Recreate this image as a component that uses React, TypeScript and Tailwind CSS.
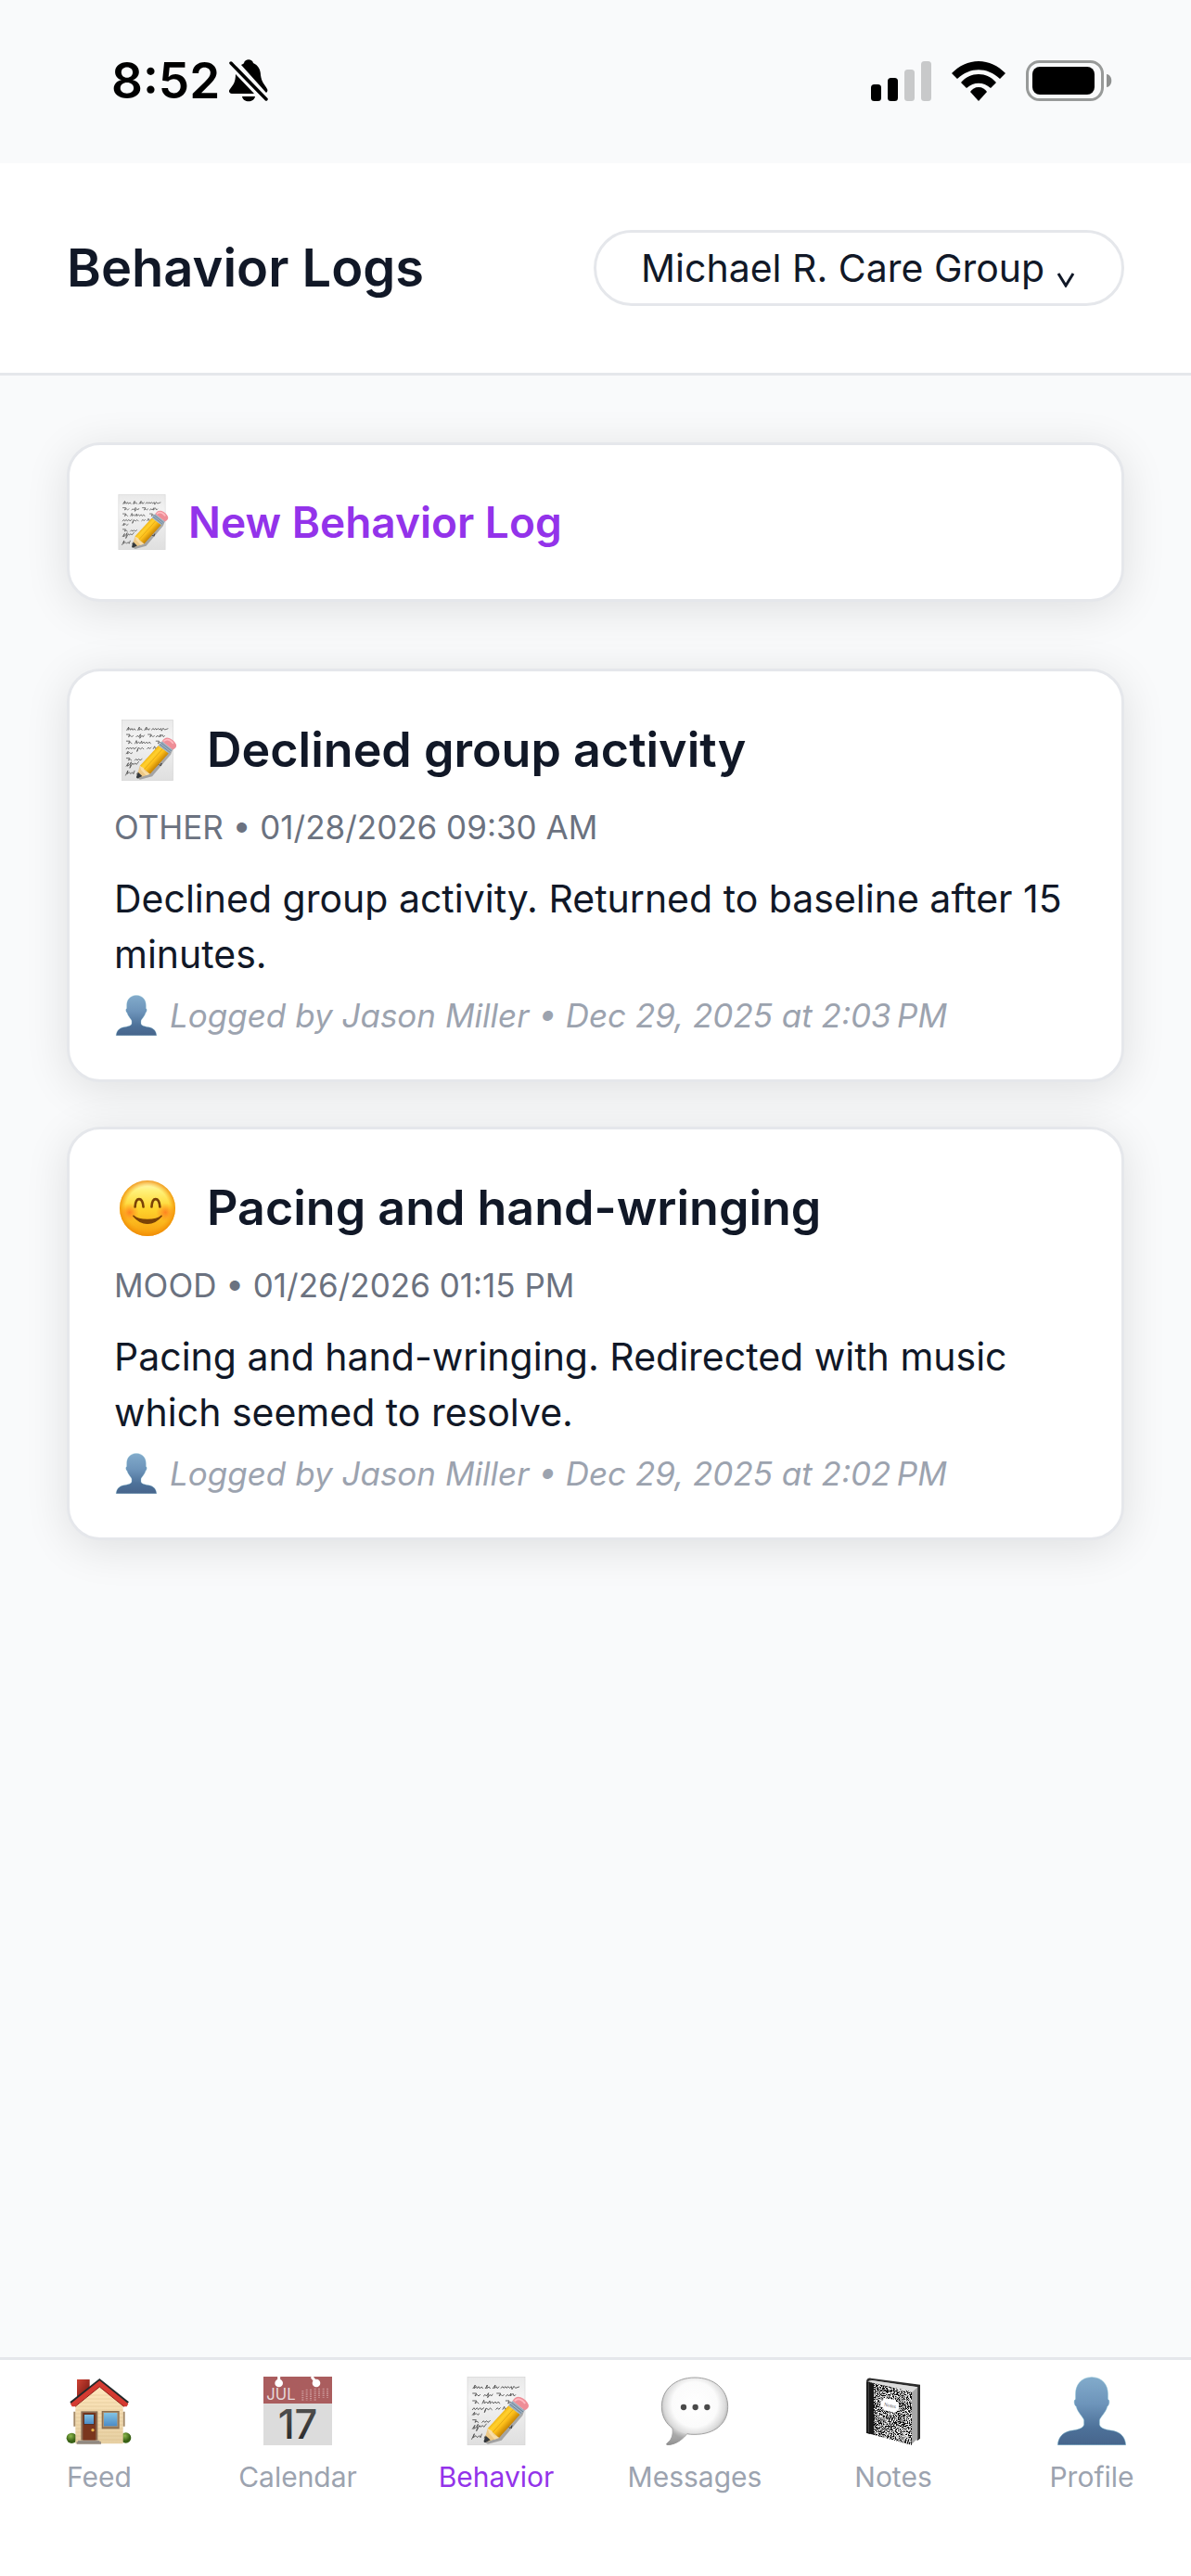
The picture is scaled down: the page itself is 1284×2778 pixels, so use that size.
import React, { useState } from 'react'

interface IconProps {
  className?: string
}

interface BehaviorLog {
  id: number
  icon: React.FC<IconProps>
  title: string
  category: string
  occurredAt: string
  notes: string
  author: string
  loggedAt: string
}

const MemoIcon: React.FC<IconProps> = ({ className }) => (
  <svg viewBox="0 0 222 222" className={className} aria-hidden="true">
    <defs>
      <linearGradient id="memoPaper" x1="0" y1="0" x2="0" y2="1">
        <stop offset="0" stopColor="#e9e9e9" />
        <stop offset="0.3" stopColor="#f3f3f3" />
        <stop offset="1" stopColor="#dfdfdf" />
      </linearGradient>
      <linearGradient id="memoPencil" gradientUnits="userSpaceOnUse" x1="112" y1="128" x2="150" y2="164">
        <stop offset="0" stopColor="#e9a90c" />
        <stop offset="0.3" stopColor="#ffd02e" />
        <stop offset="0.6" stopColor="#fdbf1a" />
        <stop offset="1" stopColor="#c88504" />
      </linearGradient>
    </defs>
    <rect x="18" y="1" width="186" height="220" fill="url(#memoPaper)" stroke="#d4d4d4" strokeWidth="2" />
    <g fill="none" stroke="#4a4a4a" strokeWidth="2.6" strokeLinecap="round" strokeLinejoin="round">
      <path d="M36 38l7-11-3 11 7-6 2 6 5-6 3 6 7-5 3 5M76 38l6-11-2 11 8-5 3 5M100 38l8-11-3 11 6-6 3 6 6-5M126 37l6-5 3 5 6-5 3 5 6-5 4 5 6-5 2 9 6-10 5 6 12-4" />
      <path d="M35 54h12l-5 9 7-5 5 5 5-5M70 63l5-5 4 5 7-10-3 15 8-10 4 5 4-6M113 54h12l-5 9 6-5 5 5 5-5M142 63l6-5 4 5 7-9-2 9 8-8 4 8 4-4" />
      <path d="M35 78h12l-5 9 7-5 5 5M66 87l5-11 2 11 6-6 5 6 6-9 1 9 7-6 4 6 6-6 4 6 6-6 4 6M142 78h11l-4 9 8-5 4 5" />
      <path d="M34 107l5-6 4 6 6-6 4 6 6-6 4 6 8-6M76 107l-3 9 5-14 8 5 6-5 5 5M110 106l5-5 4 5 5-5M132 106l5-9 3 9 8-6" />
      <path d="M34 124l7-9-3 9 8-5 5 5 5-4M35 140h11l-4 8 6-4 5 4M65 148l5-5 4 5 6-5 4 5 7-5M105 147l6-5 4 5" />
      <path d="M34 169l8-12-4 12 8-5 6-10-5 22 10-18 3 5 7-5 4 5 8-10M144 167l7-5 5 5 6-9-2 9" />
      <path d="M32 202l8-17-3 12 8-6 5 6 6-6 4 6 4-11M76 192l-4 7 7-2" />
    </g>
    <path d="M180 116l26-16-10 26-68 80-44 12-10-6 34-12z" fill="#000" opacity=".28" />
    <path d="M151 94l37 28-68 76-37-30z" fill="url(#memoPencil)" />
    <path d="M166 106l-68 76" stroke="#b97f05" strokeWidth="2" opacity=".6" />
    <path d="M83 168l37 30-43 14-5-5z" fill="#edc886" />
    <path d="M83 168l13 7 7 13 17 10-14 5-18-20z" fill="#f8dda6" />
    <path d="M77 191l15 14-15 8c-5 1-7-2-6-6z" fill="#33383d" />
    <path d="M164 78l39 31-15 14-38-30z" fill="#9db0c0" />
    <path d="M160 84l38 30M155 89l38 30" stroke="#60788d" strokeWidth="2.5" />
    <path d="M164 78c8-12 16-15 26-11 11 4 21 13 25 23 3 9-3 15-12 19z" fill="#ee8e97" />
    <path d="M172 77c10-8 22-3 31 8" stroke="#ffb9c0" strokeWidth="6" fill="none" strokeLinecap="round" />
  </svg>
)

const SmileIcon: React.FC<IconProps> = ({ className }) => (
  <svg viewBox="0 0 222 222" className={className} aria-hidden="true">
    <defs>
      <linearGradient id="smileFace" x1="0" y1="0" x2="0" y2="1">
        <stop offset="0" stopColor="#fff9c9" />
        <stop offset="0.18" stopColor="#fff27a" />
        <stop offset="0.5" stopColor="#ffd52e" />
        <stop offset="1" stopColor="#f79a0c" />
      </linearGradient>
      <radialGradient id="smileEdge">
        <stop offset="0.78" stopColor="#f79a0c" stopOpacity="0" />
        <stop offset="1" stopColor="#ee8a05" stopOpacity=".85" />
      </radialGradient>
      <radialGradient id="smileCheek">
        <stop offset="0" stopColor="#ff6a1e" stopOpacity=".75" />
        <stop offset="1" stopColor="#ff7a1e" stopOpacity="0" />
      </radialGradient>
    </defs>
    <circle cx="111" cy="111" r="101" fill="url(#smileFace)" />
    <circle cx="111" cy="111" r="101" fill="url(#smileEdge)" />
    <circle cx="46" cy="126" r="34" fill="url(#smileCheek)" />
    <circle cx="176" cy="126" r="34" fill="url(#smileCheek)" />
    <path d="M66 106c2-38 27-38 30 0M126 106c2-38 27-38 30 0" fill="none" stroke="#7a4207" strokeWidth="9" strokeLinecap="round" />
    <path d="M60 139c30 36 72 36 102 0-20 19-82 19-102 0z" fill="#7a4207" stroke="#7a4207" strokeWidth="5" strokeLinejoin="round" />
  </svg>
)

const PersonIcon: React.FC<IconProps> = ({ className }) => (
  <svg viewBox="0 0 222 222" className={className} aria-hidden="true">
    <defs>
      <linearGradient id="personFill" x1="0" y1="0" x2="0" y2="1">
        <stop offset="0" stopColor="#82abcb" />
        <stop offset="0.4" stopColor="#6d94ba" />
        <stop offset="0.75" stopColor="#4d7199" />
        <stop offset="1" stopColor="#47658c" />
      </linearGradient>
    </defs>
    <path
      d="M111 2C76 2 59 28 59 55v18c-8 4-4 20 2 24 5 20 24 36 25 44v14c-3 14-22 16-44 20C14 182 3 198 1 221h220c-2-23-13-39-41-46-22-4-41-6-44-20v-14c1-8 20-24 25-44 6-4 10-20 2-24V55c0-27-17-53-52-53z"
      fill="url(#personFill)"
      stroke="#74b3cb"
      strokeWidth="1.5"
    />
  </svg>
)

const HouseIcon: React.FC<IconProps> = ({ className }) => (
  <svg viewBox="0 0 222 222" className={className} aria-hidden="true">
    <defs>
      <linearGradient id="houseWall" x1="0" y1="0" x2="0" y2="1">
        <stop offset="0" stopColor="#ffe7bd" />
        <stop offset="1" stopColor="#e6cfa2" />
      </linearGradient>
      <linearGradient id="houseChimney" x1="0" y1="0" x2="1" y2="1">
        <stop offset="0" stopColor="#d04334" />
        <stop offset="1" stopColor="#6d130e" />
      </linearGradient>
      <linearGradient id="houseGlass" x1="0" y1="0" x2="0" y2="1">
        <stop offset="0" stopColor="#83c3e4" />
        <stop offset="1" stopColor="#4b8bc6" />
      </linearGradient>
      <radialGradient id="houseBush" cx=".4" cy=".3">
        <stop offset="0" stopColor="#8db84c" />
        <stop offset="1" stopColor="#386115" />
      </radialGradient>
    </defs>
    <circle cx="22" cy="199" r="17" fill="url(#houseBush)" />
    <circle cx="197" cy="198" r="17" fill="url(#houseBush)" />
    <path d="M39 9h41v28L39 72z" fill="url(#houseChimney)" />
    <path d="M28 113h7v48h-7zM187 113h7v48h-7z" fill="#a58a68" />
    <path d="M34 90l78-64 76 64v127H34z" fill="url(#houseWall)" />
    <path d="M34 96h154M34 108h154M34 120h154M34 132h154M34 144h154M34 156h154M34 168h154M34 180h154M34 192h154M34 204h154M50 84h122M66 72h92M80 60h64" stroke="#cfae7b" strokeWidth="1.5" opacity=".65" />
    <path d="M16 82L112 6l95 76-6 6-89-68-90 70z" fill="#22282a" />
    <path d="M18 88l94-75 93 75-5 9h-9l-79-64-80 64h-9z" fill="#d43a31" />
    <path d="M33 97l79-64 79 64" fill="none" stroke="#8f1d17" strokeWidth="3" />
    <rect x="52" y="112" width="54" height="94" fill="#8d6f55" />
    <rect x="58" y="117" width="42" height="89" fill="#7a361d" />
    <rect x="62" y="122" width="32" height="32" fill="url(#houseGlass)" stroke="#51210e" strokeWidth="2" />
    <circle cx="90" cy="173" r="5" fill="#eab64d" />
    <rect x="119" y="111" width="57" height="58" fill="#8d6f4f" />
    <rect x="123" y="115" width="49" height="48" fill="#b19470" />
    <rect x="126" y="117" width="43" height="43" fill="url(#houseGlass)" />
    <path d="M42 206h70v6h5v7H38v-7h4z" fill="#a39a90" />
    <path d="M38 212h79" stroke="#6d665f" strokeWidth="2" />
  </svg>
)

const CalendarIcon: React.FC<IconProps> = ({ className }) => (
  <svg viewBox="0 0 222 222" className={`overflow-visible ${className}`} aria-hidden="true">
    <defs>
      <linearGradient id="calendarDay" x1="0" y1="0" x2="0" y2="1">
        <stop offset="0" stopColor="#5a5a5a" />
        <stop offset="1" stopColor="#222222" />
      </linearGradient>
    </defs>
    <rect width="222" height="222" fill="#dcdcdc" />
    <rect width="222" height="87" fill="#aa5d5e" />
    <path d="M50 0v20M156 0l15 20" stroke="#fff" strokeWidth="9" />
    <circle cx="50" cy="21" r="13" fill="#fff" />
    <circle cx="171" cy="21" r="13" fill="#fff" />
    <path d="M127 45v32M140 41v36M153 41v36M167 38v39M180 38v30M194 38v30M207 38v30" stroke="#c99596" strokeWidth="6" strokeDasharray="4 3" />
    <text x="10" y="75" fontFamily="Inter, sans-serif" fontSize="50" fill="#e6d9d9">JUL</text>
    <text x="111" y="200" textAnchor="middle" fontFamily="Inter, sans-serif" fontSize="130" fontWeight="500" fill="url(#calendarDay)">17</text>
  </svg>
)

const MessageIcon: React.FC<IconProps> = ({ className }) => (
  <svg viewBox="0 0 222 222" className={className} aria-hidden="true">
    <defs>
      <radialGradient id="messageBubble" gradientUnits="userSpaceOnUse" cx="111" cy="90" r="118">
        <stop offset="0" stopColor="#ffffff" />
        <stop offset="0.62" stopColor="#fbfbfb" />
        <stop offset="0.84" stopColor="#dadada" />
        <stop offset="1" stopColor="#9d9d9d" />
      </radialGradient>
      <linearGradient id="messageTail" x1="0" y1="0" x2="0" y2="1">
        <stop offset="0" stopColor="#d0d0d0" stopOpacity="0" />
        <stop offset="1" stopColor="#8c8c8c" />
      </linearGradient>
    </defs>
    <path
      d="M111 3c62 0 107 38 107 94 0 57-45 90-107 90-9 0-17 0-25-2-13 16-35 35-63 36-4 0-4-4-1-6 14-10 20-26 17-48C17 151 4 127 4 97 4 41 49 3 111 3z"
      fill="url(#messageBubble)"
      stroke="#a0a0a0"
      strokeWidth="3"
    />
    <path d="M86 185c-13 16-35 35-63 36-4 0-4-4-1-6 14-10 20-26 17-48 14 9 30 15 47 18z" fill="url(#messageTail)" />
    <circle cx="75" cy="99" r="9.5" fill="#4a4a4a" />
    <circle cx="113" cy="99" r="9.5" fill="#4a4a4a" />
    <circle cx="151" cy="99" r="9.5" fill="#4a4a4a" />
  </svg>
)

const NotebookIcon: React.FC<IconProps> = ({ className }) => (
  <svg viewBox="0 0 222 222" className={className} aria-hidden="true">
    <defs>
      <filter id="notebookSpeckle" x="0" y="0" width="1" height="1">
        <feTurbulence type="fractalNoise" baseFrequency=".35" numOctaves="2" seed="4" />
        <feColorMatrix values="5 0 0 0 -2.2  5 0 0 0 -2.2  5 0 0 0 -2.2  0 0 0 0 1" />
        <feComposite in2="SourceGraphic" operator="in" />
      </filter>
    </defs>
    <path d="M24 16c0-8 6-12 14-11l160 21v174l-10 8V44z" fill="#2b2b2b" />
    <path d="M30 17c2-6 7-6 12-5l148 22v166l-19 18V50z" fill="#a6a6a6" />
    <path d="M34 17l8-5 148 22-18 16z" fill="#dcdcdc" />
    <path d="M24 16l147 33v172L24 182z" fill="#444" filter="url(#notebookSpeckle)" />
    <path d="M24 16l24 6v166l-24-6z" fill="#171717" />
    <path d="M31 20v160" stroke="#4c4c4c" strokeWidth="3" />
    <path d="M81 69l36 6c3 8 7 11 12 12v20c-6 0-9 4-11 10l-36-8c-3-7-7-11-12-12V79c6 0 9-4 11-10z" fill="#fff" />
    <text x="80" y="95" fontFamily="Liberation Serif, serif" fontSize="17" fill="#555" transform="rotate(11 80 95)">Notes</text>
  </svg>
)

const SilentIcon: React.FC<IconProps> = ({ className }) => (
  <svg viewBox="0 0 42 46" className={className} aria-hidden="true">
    <path d="M13 6c1-1 3-1 3-2 1-5 9-5 10 0 5 2 8 7 8 13 1 8 5 11 7 15 1 2 0 3-1 4z" />
    <path d="M7 16l20 21H3c-3 0-4-3-2-5 3-4 6-7 6-16zM14 40h14c-1 7-13 7-14 0z" />
    <path d="M2 4l38 39" stroke="#000" strokeWidth="3.5" strokeLinecap="round" />
  </svg>
)

const SignalIcon: React.FC<IconProps> = ({ className }) => (
  <svg viewBox="0 0 65 43" className={className} aria-hidden="true">
    <rect x="0" y="25" width="11" height="18" rx="3.5" />
    <rect x="18" y="18" width="11" height="25" rx="3.5" />
    <rect x="36" y="9" width="11" height="34" rx="3.5" fill="#c8c9ca" />
    <rect x="54" y="0" width="11" height="43" rx="3.5" fill="#c8c9ca" />
  </svg>
)

const WifiIcon: React.FC<IconProps> = ({ className }) => (
  <svg viewBox="0 0 58 43" className={className} aria-hidden="true">
    <path d="M29 0c11 0 21 5 29 13l-6 6c-14-13-32-13-46 0l-6-6C8 5 18 0 29 0z" />
    <path d="M29 14c7 0 14 3 19 9l-6 6c-8-7-18-7-26 0l-6-6c5-6 12-9 19-9z" />
    <path d="M29 28c4 0 7 2 9 5l-9 10-9-10c2-3 5-5 9-5z" />
  </svg>
)

const BatteryIcon: React.FC<IconProps> = ({ className }) => (
  <svg viewBox="0 0 93 44" className={className} aria-hidden="true">
    <rect x="1.5" y="1.5" width="81" height="41" rx="13" fill="none" stroke="#989a99" strokeWidth="3" />
    <rect x="7" y="7" width="67" height="30" rx="8" />
    <path d="M87 15c7 1 7 13 0 14z" fill="#8f9190" />
  </svg>
)

const logs: BehaviorLog[] = [
  {
    id: 1,
    icon: MemoIcon,
    title: 'Declined group activity',
    category: 'OTHER',
    occurredAt: '01/28/2026 09:30 AM',
    notes: 'Declined group activity. Returned to baseline after 15 minutes.',
    author: 'Jason Miller',
    loggedAt: 'Dec 29, 2025 at 2:03\u202fPM',
  },
  {
    id: 2,
    icon: SmileIcon,
    title: 'Pacing and hand-wringing',
    category: 'MOOD',
    occurredAt: '01/26/2026 01:15 PM',
    notes: 'Pacing and hand-wringing. Redirected with music which seemed to resolve.',
    author: 'Jason Miller',
    loggedAt: 'Dec 29, 2025 at 2:02\u202fPM',
  },
]

const tabs = [
  { label: 'Feed', icon: HouseIcon },
  { label: 'Calendar', icon: CalendarIcon },
  { label: 'Behavior', icon: MemoIcon },
  { label: 'Messages', icon: MessageIcon },
  { label: 'Notes', icon: NotebookIcon },
  { label: 'Profile', icon: PersonIcon },
]

const cardStyle = 'bg-white border-3 border-[#e5e7eb] rounded-[36px] shadow-[0_8px_48px_rgba(0,0,0,0.11)]'

const LogCard: React.FC<{ log: BehaviorLog }> = ({ log }) => {
  const Icon = log.icon

  return (
    <article className={`${cardStyle} px-12 py-[45px]`}>
      <h2 className="flex items-center gap-7 text-[52px] leading-[80px] font-semibold">
        <Icon className="w-[72px] h-[66px]" />
        {log.title}
      </h2>
      <p className="mt-5 text-[35px] leading-[46px] text-[#6b7280]">
        {log.category} • {log.occurredAt}
      </p>
      <p className="mt-6 text-[41px] leading-[60px]">{log.notes}</p>
      <p className="flex items-center gap-3 mt-3 text-[35px] leading-[48px] italic text-[#9ca3af]">
        <PersonIcon className="w-12 h-11" />
        Logged by {log.author} • {log.loggedAt}
      </p>
    </article>
  )
}

const App: React.FC = () => {
  const [group, setGroup] = useState('Michael R. Care Group')
  const [activeTab, setActiveTab] = useState('Behavior')

  return (
    <div className="min-h-screen flex flex-col bg-[#f9fafb] text-[#111827] font-[Inter,sans-serif]">
      <div className="h-44 flex items-center justify-between pl-[120px] pr-[85px] pb-0.5 text-black">
        <div className="flex items-center gap-2.5">
          <span className="text-[53px] leading-[60px] font-semibold">8:52</span>
          <SilentIcon className="w-[42px] h-[46px]" />
        </div>
        <div className="flex items-center gap-[22px]">
          <SignalIcon className="w-[65px] h-[43px]" />
          <WifiIcon className="w-[58px] h-[43px]" />
          <BatteryIcon className="w-[93px] h-11" />
        </div>
      </div>

      <header className="flex items-center justify-between px-[72px] py-[72px] bg-white border-b-3 border-[#e5e7eb]">
        <h1 className="text-[56px] leading-[82px] font-semibold">Behavior Logs</h1>
        <div className="relative">
          <label htmlFor="group" className="sr-only">Care group</label>
          <select
            id="group"
            value={group}
            onChange={e => setGroup(e.target.value)}
            className="appearance-none h-[82px] pl-12 pr-[82px] border-3 border-[#e5e7eb] rounded-full bg-white text-[41px] leading-[60px]"
          >
            <option>Michael R. Care Group</option>
          </select>
          <svg viewBox="0 0 20 16" className="absolute right-[53px] bottom-5 w-5 h-4 pointer-events-none" aria-hidden="true">
            <path d="M2 1l8 13 8-13" fill="none" stroke="#111827" strokeWidth="3" />
          </svg>
        </div>
      </header>

      <main className="flex-1 p-[72px]">
        <button type="button" className={`${cardStyle} w-full h-[172px] px-12 flex items-center gap-5 text-[46px] font-semibold text-[#9333ea]`}>
          <MemoIcon className="w-[60px] h-[60px]" />
          New Behavior Log
        </button>
        <div className="mt-[72px] flex flex-col gap-12">
          {logs.map(log => (
            <LogCard key={log.id} log={log} />
          ))}
        </div>
      </main>

      <nav className="grid grid-cols-6 h-[236px] pt-[18px] bg-white border-t-3 border-[#e5e7eb]">
        {tabs.map(({ label, icon: Icon }) => (
          <a
            key={label}
            href={`#${label.toLowerCase()}`}
            onClick={() => setActiveTab(label)}
            className={`flex flex-col items-center gap-3.5 text-[30px] leading-10 ${label === activeTab ? 'text-[#9333ea]' : 'text-[#9ca3af]'}`}
          >
            <Icon className="w-[74px] h-[74px]" />
            {label}
          </a>
        ))}
      </nav>
    </div>
  )
}

export default App
